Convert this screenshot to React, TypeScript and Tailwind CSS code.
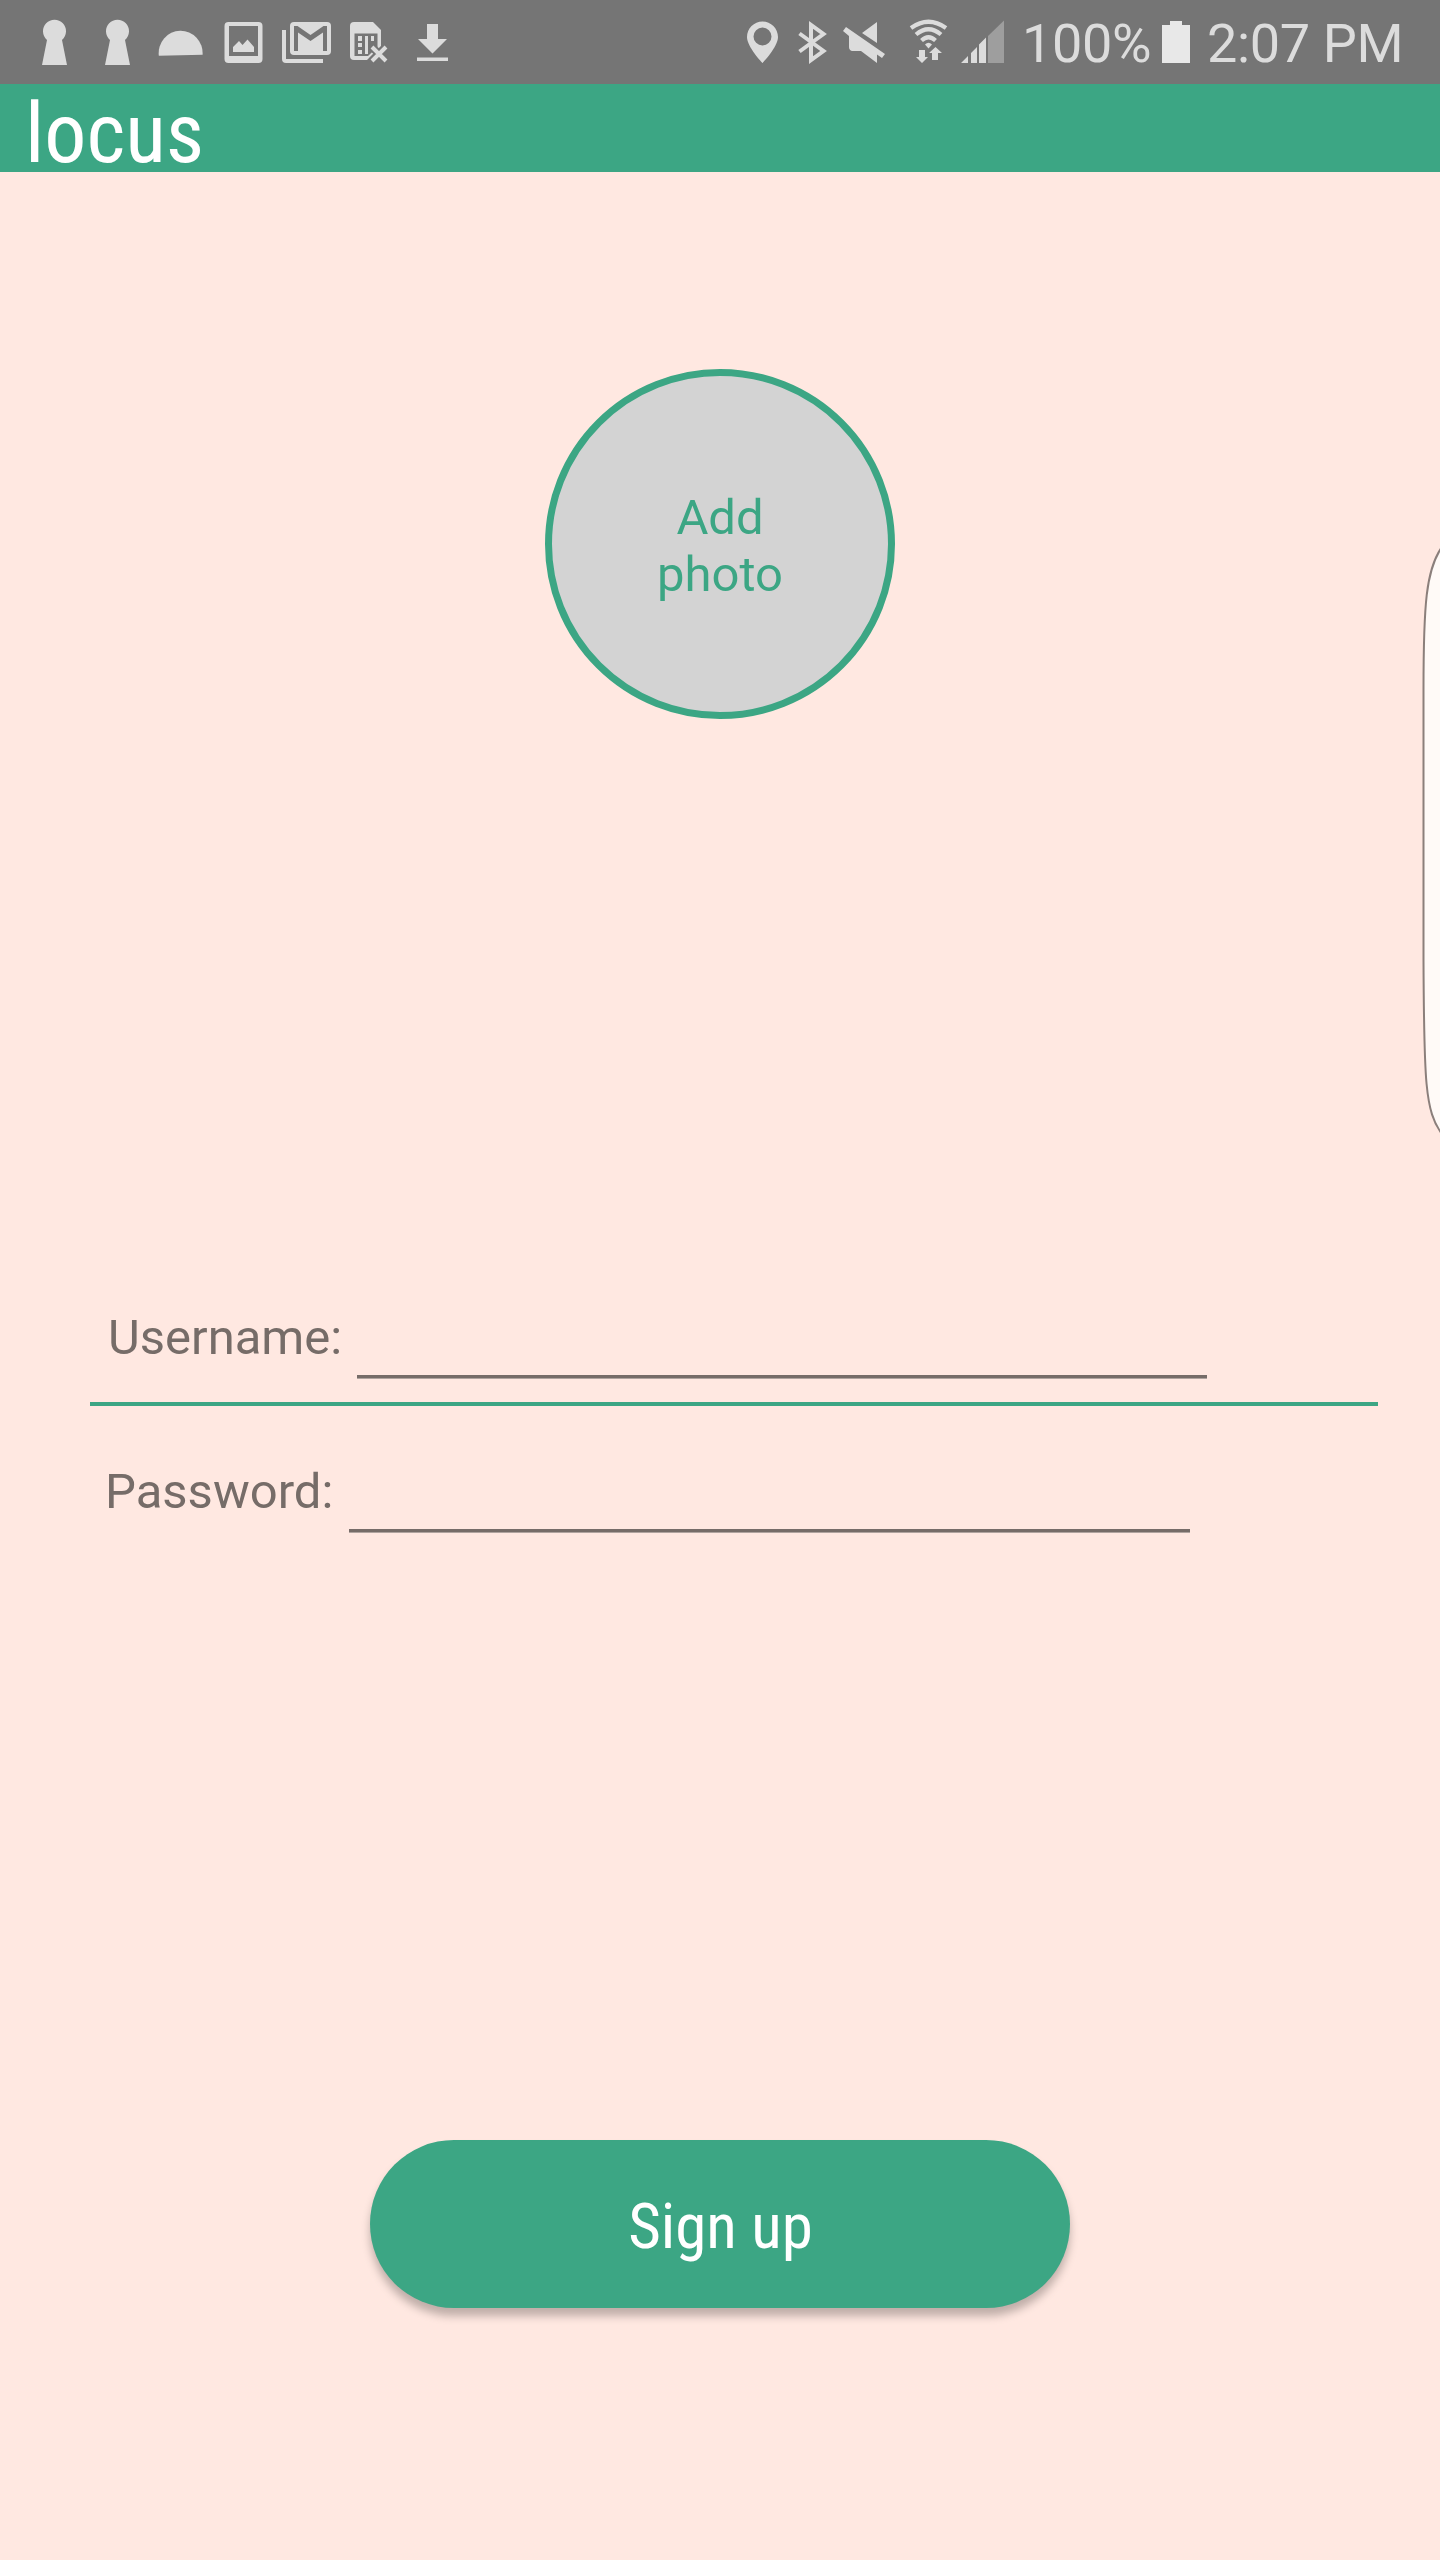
import React from "react";

type GlyphProps = { x: number; w: number; gap: number; children: React.ReactNode };

// Each glyph is drawn in status-bar coordinates; x and w select its slice.
function Glyph({ x, w, gap, children }: GlyphProps) {
  return (
    <svg
      className="shrink-0"
      style={{ marginLeft: gap }}
      width={w}
      height={84}
      viewBox={`${x} 0 ${w} 84`}
      fill="#dcdcdc"
    >
      {children}
    </svg>
  );
}

function StatusBar() {
  return (
    <header className="flex h-[84px] bg-[#757575] text-[54px] leading-[88px] tracking-[-0.35px] text-[#dcdcdc]">
      <Glyph x={42} w={25} gap={42}>
        <path d="M47 40A11.5 11.5 0 1 1 62 40L67 65H42Z" />
      </Glyph>
      <Glyph x={42} w={25} gap={38}>
        <path d="M47 40A11.5 11.5 0 1 1 62 40L67 65H42Z" />
      </Glyph>
      <Glyph x={158} w={45} gap={28}>
        <path d="M158.800 55.800A22 22.500 0 1 1 202.600 54.800Z" />
      </Glyph>
      <Glyph x={224} w={39} gap={21}>
        <path
          fillRule="evenodd"
          d="M228.500 22H258.500Q262.500 22 262.500 26V59Q262.500 63 258.500 63H228.500Q224.500 63 224.500 59V26Q224.500 22 228.500 22ZM229 26V56H258V26ZM233 52V47L239 41L242.500 45L247.500 39.500L254 47V52Z"
        />
      </Glyph>
      <Glyph x={282} w={49} gap={19}>
        <path d="M282 30H286V59H323V63H286Q282 63 282 59Z" />
        <rect x="290" y="22" width="41" height="33" rx="4" />
        <path
          fill="#757575"
          d="M294 26H297.500L310.500 35L323.500 26H327V51H323V32.500L310.500 41L298 32.500V51H294Z"
        />
      </Glyph>
      <Glyph x={350} w={38} gap={19}>
        <path d="M354 22H373L381 30V46L367 60H354Q350 60 350 56V26Q350 22 354 22Z" />
        <path fill="#757575" d="M354.500 33.500H377.500V47L368 56H354.500Z" />
        <path d="M358 36h4v5h-4zM365 36h3v5h-3zM371 36h3v5h-3zM358 43h4v4h-4zM365 41h3v13h-3zM358 50h4v4h-4z" />
        <path d="M372 47L386 61M386 47L372 61" stroke="#757575" strokeWidth="8" />
        <path d="M372 47L386 61M386 47L372 61" stroke="#dcdcdc" strokeWidth="4" />
      </Glyph>
      <Glyph x={417} w={31} gap={29}>
        <path d="M427 24H438V39H447L432.500 53.500L418 39H427ZM417 57.500H448V61H417Z" />
      </Glyph>
      <Glyph x={747} w={31} gap={299}>
        <path
          fillRule="evenodd"
          d="M762.500 21.500C754 21.500 747 28.500 747 37C747 47 762.500 63 762.500 63C762.500 63 778 47 778 37C778 28.500 771 21.500 762.500 21.500ZM762.500 27.500A9 9 0 1 1 762.500 45.500A9 9 0 1 1 762.500 27.500Z"
        />
      </Glyph>
      <Glyph x={798} w={29} gap={20}>
        <path
          d="M799.500 33.500L823.500 51L811 60V25L823.500 34L799.500 51.500"
          fill="none"
          stroke="#dcdcdc"
          strokeWidth="4"
        />
      </Glyph>
      <Glyph x={843} w={43} gap={16}>
        <path d="M877 22V43L862 33ZM846 27L885 54L882 58L877 54.500V63L861 51H852Q849 50 849 47V36L843 31Z" />
      </Glyph>
      <Glyph x={909} w={39} gap={23}>
        <g fill="none" stroke="#dcdcdc" strokeWidth="4.200">
          <path d="M911 28Q928.500 15.500 946 28" />
          <path d="M916 34.500Q928.500 24 941 34.500" />
          <path d="M921.500 40.500Q928.500 34 935.500 40.500" />
        </g>
        <path d="M925 44.500Q928.500 41 932 44.500L928.500 48.500Z" />
        <path d="M919 50H925V57H928L922 63L916 57H919ZM932 60V53H929L935.500 47L942 53H938V60Z" />
      </Glyph>
      <Glyph x={961} w={43} gap={13}>
        <path d="M961 63L968 56V63ZM971 53L977 47V63H971ZM979 44.500L986 37.500V63H979Z" />
        <path fill="#9e9e9e" d="M988 36L1004 20.500V63H988Z" />
      </Glyph>
      <span className="ml-[18px] w-[130px] whitespace-nowrap">100%</span>
      <Glyph x={1162} w={28} gap={10}>
        <path fill="#e8e8e8" d="M1162 25H1170V21H1182V25H1190V63H1162Z" />
      </Glyph>
      <span className="ml-[17px] whitespace-nowrap">2:07 PM</span>
    </header>
  );
}

function Field({ label, className, lineClass }: { label: string; className: string; lineClass: string }) {
  return (
    <label className={`flex items-start ${className}`}>
      <span className="whitespace-nowrap text-[49px] leading-[60px] text-[#766c68]">{label}</span>
      <span className={`h-[4px] border-b border-[#b0a49f] bg-[#766c68] ${lineClass}`} />
    </label>
  );
}

export default function App() {
  return (
    <div className="relative flex h-[2560px] w-[1440px] flex-col overflow-hidden bg-[#ffe8e1] font-['Roboto',sans-serif]">
      <StatusBar />
      <div className="h-[88px] bg-[#3ca684] pl-[25px] text-[84px] leading-[100px] text-white font-['Roboto_Condensed','Roboto',sans-serif] [font-stretch:75%]">
        locus
      </div>
      <main className="flex flex-col">
        <button className="mt-[197px] flex size-[350px] flex-col items-center justify-center self-center rounded-full border-[7px] border-[#3ca684] bg-[#d3d3d3] pt-[3px] text-[49px] leading-[57px] text-[#3ca684]">
          <span>Add</span>
          <span>photo</span>
        </button>
        <section className="mt-[589px] flex flex-col">
          <Field label="Username:" className="ml-[108px] h-[94px]" lineClass="ml-[15px] mt-[67px] w-[850px]" />
          <div className="ml-[90px] h-[4px] w-[1288px] bg-[#3ca684]" />
          <Field label="Password:" className="mt-[56px] ml-[105px] h-[94px]" lineClass="ml-[16px] mt-[67px] w-[841px]" />
        </section>
        <button className="mt-[584px] h-[168px] w-[700px] self-center rounded-[84px] bg-[#3ca684] pt-[5px] pl-[1px] text-[63px] leading-[163px] text-white shadow-[0_8px_8px_rgba(0,0,0,0.25)] font-['Roboto_Condensed','Roboto',sans-serif] [font-stretch:75%]">
          Sign up
        </button>
      </main>
      <svg className="absolute top-[530px] right-0" width="20" height="620" viewBox="1420 530 20 620">
        <path
          d="M1442 547C1426 569 1423.500 605 1423.500 690V960C1424 1080 1425 1112 1442 1134"
          fill="#fffaf7"
          stroke="#8b7f7b"
          strokeWidth="2"
        />
      </svg>
    </div>
  );
}
